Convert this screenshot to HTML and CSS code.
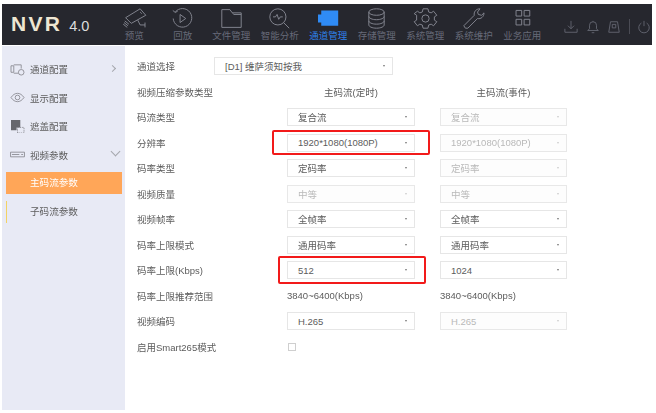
FILE: index.html
```html
<!DOCTYPE html>
<html lang="zh">
<head>
<meta charset="utf-8">
<title>NVR 4.0</title>
<link rel="stylesheet" href="styles.css">
</head>
<body>
<div class="app">
  <header class="topbar">
    <div class="logo"><b>NVR</b><span>4.0</span></div>
    <nav class="nav">
      <div class="nav-item"><svg viewBox="0 0 30 26"><path d="M4 12 L22 1 L29 9 L11 19 Z M22 5l2 2M3 16l5 4M2 18l5 4M1 20l5 4M19 15l3 6h6M28 18v6"/></svg><span>预览</span></div>
      <div class="nav-item"><svg viewBox="0 0 30 26"><path d="M6 5A11.500 11.500 0 1 1 3.500 13M3 3l3 2.500 3-1.500M12 8l7 5-7 5Z"/></svg><span>回放</span></div>
      <div class="nav-item"><svg viewBox="0 0 30 26"><path d="M3 2h10l3 4h11v18H3ZM16 6l2 2h9"/></svg><span>文件管理</span></div>
      <div class="nav-item"><svg viewBox="0 0 30 26"><circle cx="13" cy="11" r="10"/><path d="M20 18l7 7M7 11h3l2-3 2 6 2-3h3"/></svg><span>智能分析</span></div>
      <div class="nav-item active"><svg viewBox="0 0 30 26"><path class="solid" d="M6 3h21v19H6v-4H2V8h4Z"/></svg><span>通道管理</span></div>
      <div class="nav-item"><svg viewBox="0 0 30 26"><ellipse cx="15" cy="5" rx="9.500" ry="4"/><path d="M5.500 5v16c0 2 4 4 9.500 4s9.500-2 9.500-4V5M5.500 10.500c0 2 4 4 9.500 4s9.500-2 9.500-4M5.500 16c0 2 4 4 9.500 4s9.500-2 9.500-4"/></svg><span>存储管理</span></div>
      <div class="nav-item"><svg viewBox="0 0 30 26"><circle cx="15" cy="13" r="4.500"/><path d="M12 1h6l1 4 3 1 3-2 4 5-3 2v4l3 2-4 5-3-2-3 1-1 4h-6l-1-4-3-1-3 2-4-5 3-2V9L1 7l4-3 3 2 3-1Z"/></svg><span>系统管理</span></div>
      <div class="nav-item"><svg viewBox="0 0 30 26"><path d="M5 25l-2-3L16 9c-1-4 2-8 7-8l-3 4 1 3 4 1 3-3c0 5-4 8-8 7L8 25Z"/></svg><span>系统维护</span></div>
      <div class="nav-item"><svg viewBox="0 0 30 26"><path d="M7 3h7v7H7ZM17 3h7v7h-7ZM7 14h7v7H7ZM17 14h7v7h-7Z"/></svg><span>业务应用</span></div>
    </nav>
    <div class="tools">
      <svg viewBox="0 0 16 16"><path d="M8 1v9M4.500 6.500 8 10l3.500-3.500M1 10v4h14v-4"/></svg>
      <svg viewBox="0 0 16 16"><path d="M2 12h12l-2-2V6a4 4 0 0 0-8 0v4ZM8 1v1M6.500 14.500h3"/></svg>
      <svg viewBox="0 0 16 16"><path d="M4 2h8l2 12H2ZM6 5h4v4H6Z"/></svg>
      <i class="tool-sep"></i>
      <svg viewBox="0 0 16 16"><path d="M5 3.500a6 6 0 1 0 6 0M8 1v6"/></svg>
    </div>
  </header>
  <div class="main">
    <aside class="sidebar">
      <div class="side-item">
        <svg viewBox="0 0 16 14"><path d="M1 3h3v7H1ZM4 2h8v4M4 11h5"/><circle cx="12" cy="10" r="3"/></svg>
        <span>通道配置</span><em class="chev-r"></em>
      </div>
      <div class="side-item">
        <svg viewBox="0 0 16 14"><path d="M1 7c4-6 10-6 14 0-4 6-10 6-14 0Z"/><circle cx="8" cy="7" r="2.500"/></svg>
        <span>显示配置</span>
      </div>
      <div class="side-item">
        <svg viewBox="0 0 16 14"><path class="fill" d="M1 0h10v8H7v3H1Z"/><path class="dash" d="M8 8h7v6H8Z"/></svg>
        <span>遮盖配置</span>
      </div>
      <div class="side-item">
        <svg viewBox="0 0 16 14"><path d="M0.500 4.500h15v5h-15ZM2 7h8M12 7h2"/></svg>
        <span>视频参数</span><em class="chev-d"></em>
      </div>
      <div class="sub-item current">主码流参数</div>
      <div class="sub-item marked">子码流参数</div>
    </aside>
    <section class="content">
      <div class="form">
        <div class="row channel">
          <label>通道选择</label>
          <div class="select"><span>[D1] 维萨须知按我</span></div>
        </div>
        <div class="row">
          <label>视频压缩参数类型</label>
          <div class="col-head">主码流(定时)</div>
          <div class="col-head">主码流(事件)</div>
        </div>
        <div class="row">
          <label>码流类型</label>
          <div class="select"><span>复合流</span></div>
          <div class="select off"><span>复合流</span></div>
        </div>
        <div class="row">
          <label>分辨率</label>
          <div class="select"><span>1920*1080(1080P)</span><i class="mark mark-a"></i></div>
          <div class="select off"><span>1920*1080(1080P)</span></div>
        </div>
        <div class="row">
          <label>码率类型</label>
          <div class="select"><span>定码率</span></div>
          <div class="select off"><span>定码率</span></div>
        </div>
        <div class="row">
          <label>视频质量</label>
          <div class="select off"><span>中等</span></div>
          <div class="select off"><span>中等</span></div>
        </div>
        <div class="row">
          <label>视频帧率</label>
          <div class="select"><span>全帧率</span></div>
          <div class="select"><span>全帧率</span></div>
        </div>
        <div class="row">
          <label>码率上限模式</label>
          <div class="select"><span>通用码率</span></div>
          <div class="select"><span>通用码率</span></div>
        </div>
        <div class="row">
          <label>码率上限(Kbps)</label>
          <div class="select"><span>512</span><i class="mark mark-b"></i></div>
          <div class="select"><span>1024</span></div>
        </div>
        <div class="row">
          <label>码率上限推荐范围</label>
          <div class="plain">3840~6400(Kbps)</div>
          <div class="plain">3840~6400(Kbps)</div>
        </div>
        <div class="row">
          <label>视频编码</label>
          <div class="select"><span>H.265</span></div>
          <div class="select off"><span>H.265</span></div>
        </div>
        <div class="row">
          <label>启用Smart265模式</label>
          <div class="check-cell"><i class="check"></i></div>
        </div>
      </div>
    </section>
  </div>
</div>
</body>
</html>
```
FILE: styles.css
```css
* { box-sizing: border-box; }
html, body { margin: 0; height: 100%; background: #fff; }
body { font-family: "Liberation Sans", "Noto Sans CJK SC", sans-serif; font-size: 10px; color: #5c5c5c; overflow: hidden; }
.app { width: 650px; height: 413px; margin-left: 2px; padding-top: 4px; display: flex; flex-direction: column; filter: blur(0.35px); }
.topbar { height: 41px; background: #26272e; display: flex; align-items: stretch; flex: none; }
.logo { width: 108px; flex: none; padding: 10px 0 0 9px; color: #eee6d2; display: flex; align-items: baseline; gap: 7px; }
.logo b { font-size: 21px; letter-spacing: 2.300px; font-weight: 700; line-height: 20px; }
.logo span { font-size: 14.500px; font-weight: 400; color: #ddd; line-height: 20px; }
.nav { display: flex; flex: none; }
.nav-item { width: 48.500px; display: flex; flex-direction: column; align-items: center; color: #676a78; font-size: 9.500px; line-height: 12px; white-space: nowrap; padding-top: 4px; }
.nav-item svg { width: 25px; height: 21px; fill: none; stroke: #83858f; stroke-width: 1.200; margin-bottom: 1px; flex: none; }
.nav-item.active { color: #2f80e8; }
.nav-item .solid { fill: #2f8bf5; stroke: none; }
.tools { flex: none; display: flex; align-items: center; gap: 7.500px; padding: 4px 0 0 17.500px; }
.tools svg { width: 14px; height: 14px; fill: none; stroke: #666873; stroke-width: 1; flex: none; }
.tool-sep { width: 1px; height: 15px; background: #4a4b54; }
.main { flex: 1; display: flex; min-height: 0; padding-top: 1px; }
.sidebar { width: 123px; height: 364px; flex: none; background: #e8eaf5; padding-top: 9px; }
.side-item { height: 28.500px; display: flex; align-items: center; padding-left: 8px; font-size: 9.500px; position: relative; }
.side-item svg { width: 15px; height: 13px; fill: none; stroke: #85868d; stroke-width: 0.900; margin-right: 5px; flex: none; }
.side-item .fill { fill: #66676d; stroke: none; }
.side-item .dash { stroke-dasharray: 1.500 1; }
.chev-r { position: absolute; left: 108px; top: 11px; width: 5px; height: 5px; border-top: 1px solid #a5a7ad; border-right: 1px solid #a5a7ad; transform: rotate(45deg); }
.chev-d { position: absolute; left: 110px; top: 7px; width: 7px; height: 7px; border-bottom: 1px solid #a5a7ad; border-right: 1px solid #a5a7ad; transform: rotate(45deg); }
.sub-item { margin-left: 4px; width: 116px; height: 22px; line-height: 22px; padding-left: 24px; font-size: 9.600px; }
.sub-item.current { margin-top: 3px; background: #ffa658; color: #fff; }
.sub-item.marked { margin-top: 7px; border-left: 1px solid #f3d264; padding-left: 23px; }
.content { flex: 1; padding: 7.500px 0 0 12px; }
.form { display: flex; flex-direction: column; }
.row { height: 25.500px; display: grid; grid-template-columns: 150px 128px 127px; align-items: center; font-size: 9.500px; }
.row > label { white-space: nowrap; }
.row > :nth-child(3) { margin-left: 25px; width: 127px; }
.row > :nth-child(2) { width: 128px; }
.row.channel { grid-template-columns: 77px 179px; }
.row.channel > .select { width: 179px; }
.col-head { text-align: center; }
.select { height: 18px; border: 1px solid #e6e6e6; background: #fff; display: flex; align-items: center; padding-left: 10px; position: relative; }
.select::after { content: ""; position: absolute; right: 7px; top: 7px; border-left: 1.500px solid transparent; border-right: 1.500px solid transparent; border-top: 2px solid #777; }
.select.off { color: #b9b9b9; background: #fdfdfd; border-color: #e8e8e8; }
.select.off::after { border-top-color: #ccc; }
.check-cell { display: flex; align-items: center; }
.check { display: block; width: 8px; height: 8px; border: 1px solid #cfcfcf; margin-left: 1px; }
.mark { position: absolute; border: 2px solid #f21a1a; border-radius: 2px; pointer-events: none; }
.mark-a { left: -16px; top: -5px; width: 158px; height: 25px; }
.mark-b { left: -10px; top: -6px; width: 148px; height: 28px; }
```
